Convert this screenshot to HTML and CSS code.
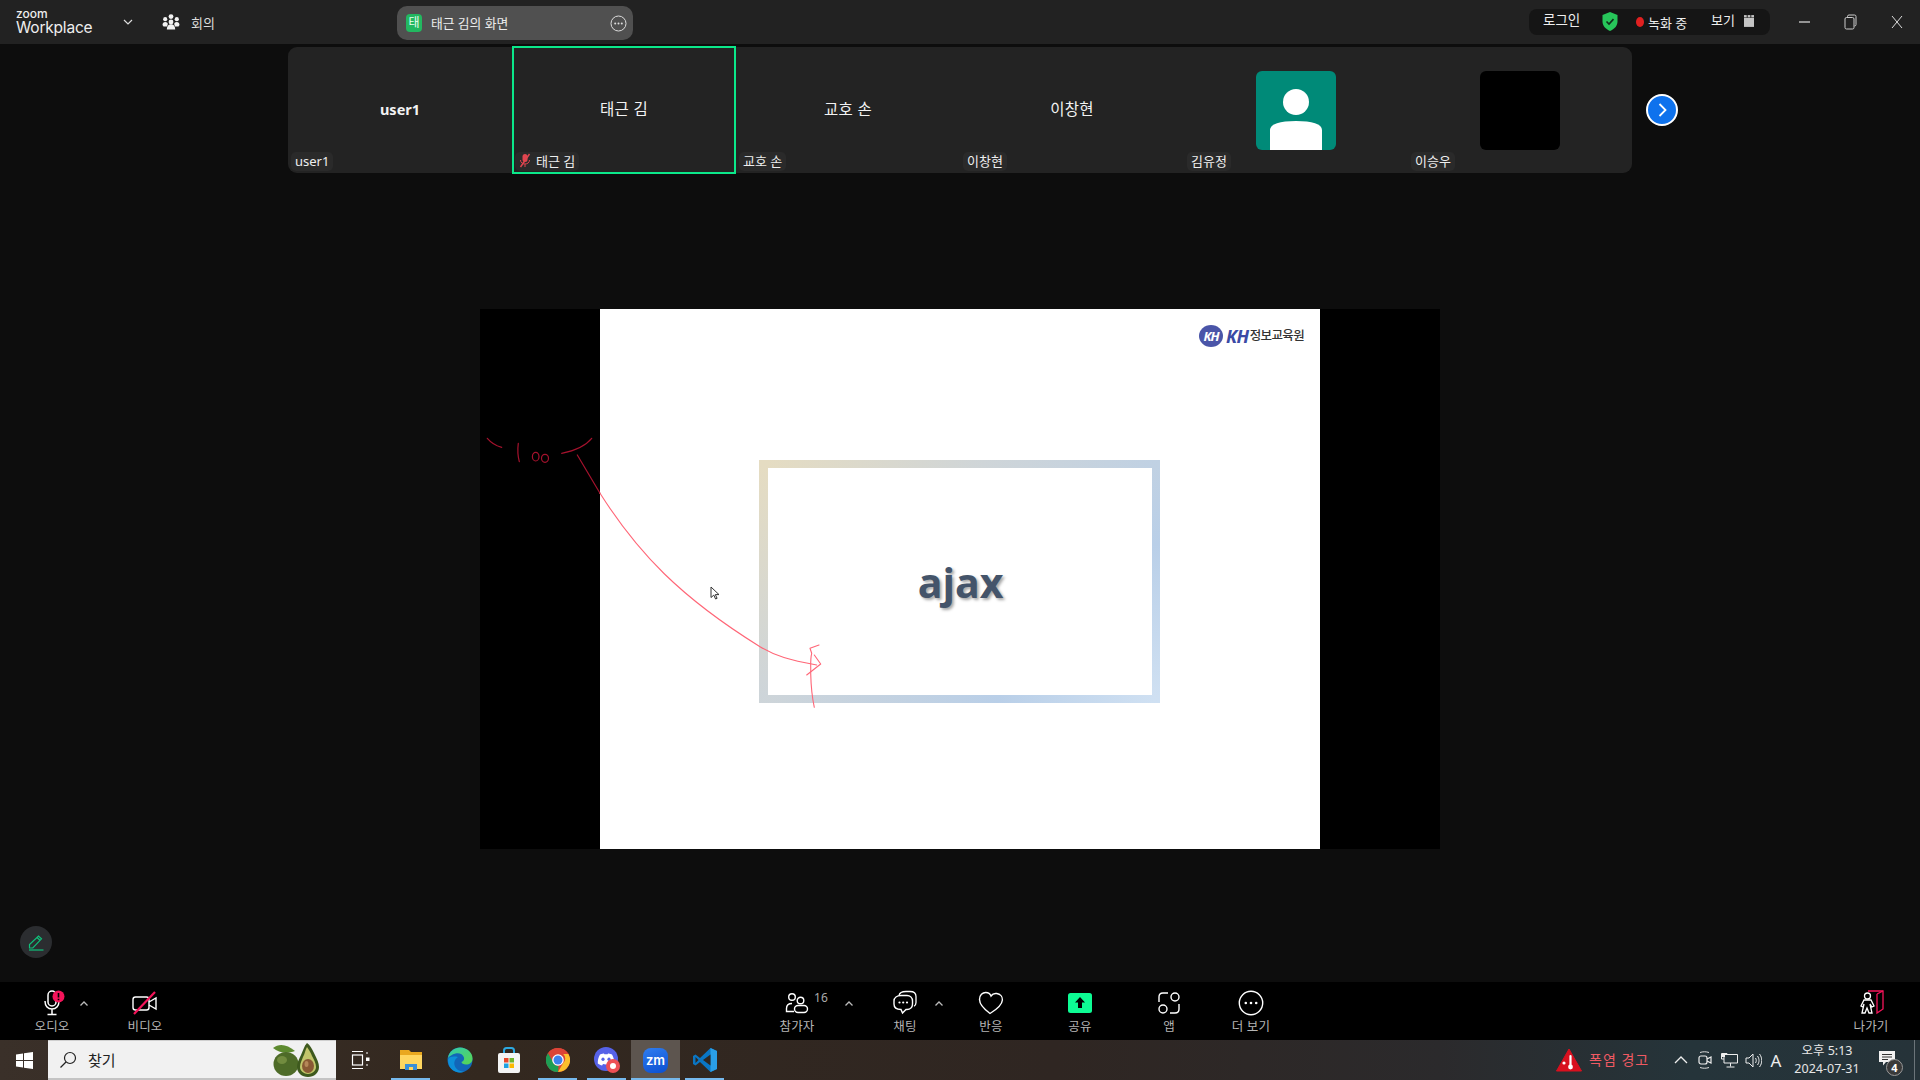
FILE: index.html
```html
<!DOCTYPE html>
<html lang="ko">
<head>
<meta charset="utf-8">
<title>Zoom Workplace</title>
<link rel="stylesheet" href="styles.css">
</head>
<body>
<div class="app">
  <header class="titlebar">
    <div class="brand"><span class="brand-small">zoom</span><span class="brand-big">Workplace</span></div>
    <svg class="brand-chevron" width="10" height="6" viewBox="0 0 10 6"><path d="M1 1l4 4 4-4" fill="none" stroke="#ddd" stroke-width="1.2"/></svg>
    <svg class="meet-icon" width="18" height="16" viewBox="0 0 18 16"><g fill="#f2f2f2"><circle cx="9" cy="2.6" r="2.4"/><circle cx="3.2" cy="5.2" r="2.1"/><circle cx="14.8" cy="5.2" r="2.1"/><circle cx="9" cy="8" r="2.4"/><path d="M0.5 11c0-2 1.2-3 2.7-3s2.5.8 2.6 2l-.8 2.4H1.5z"/><path d="M17.500 11c0-2-1.200-3-2.700-3s-2.500.8-2.600 2l.8 2.400h3.500z"/><path d="M4.800 15.500c0-3.300 1.800-5.200 4.200-5.200s4.200 1.900 4.200 5.200z"/></g></svg>
    <span class="meet-text">회의</span>
    <div class="share-tab">
      <span class="share-avatar">태</span>
      <span class="share-name">태근 김의 화면</span>
      <svg class="share-more" width="17" height="17" viewBox="0 0 17 17"><circle cx="8.500" cy="8.500" r="7.500" fill="none" stroke="#ddd" stroke-width="1"/><g fill="#ddd"><circle cx="5.200" cy="8.500" r="1"/><circle cx="8.500" cy="8.500" r="1"/><circle cx="11.800" cy="8.500" r="1"/></g></svg>
    </div>
    <div class="status-pill">
      <span class="status-login">로그인</span>
      <svg class="status-shield" width="16" height="19" viewBox="0 0 16 19"><path d="M8 0l7.500 3v6.500c0 4.500-3.200 7.500-7.500 9.500C3.700 17 .5 14 .5 9.500V3z" fill="#27c65a"/><path d="M4.500 9.500l2.500 2.600 4.500-5" fill="none" stroke="#10301c" stroke-width="1.600"/></svg>
      <span class="status-dot"></span>
      <span class="status-rec">녹화 중</span>
      <span class="status-view">보기</span>
      <svg class="status-grid" width="10" height="14" viewBox="0 0 11 15"><rect y="4" width="11" height="10" fill="#c4c4c4"/><rect x="0" y="1" width="3" height="2.500" fill="#c4c4c4"/><rect x="4" y="1" width="3" height="2.500" fill="#c4c4c4"/><rect x="8" y="1" width="3" height="2.500" fill="#c4c4c4"/></svg>
    </div>
    <div class="win-btn"><svg width="12" height="12" viewBox="0 0 12 12"><path d="M0 6h11" stroke="#bbb" stroke-width="1.500"/></svg></div>
    <div class="win-btn"><svg width="14" height="16" viewBox="0 0 14 16"><rect x="1" y="3.500" width="9" height="11.500" rx="1.500" fill="none" stroke="#ccc"/><path d="M3.500 3.500V2.500a1.500 1.500 0 0 1 1.500-1.500h5.500a1.500 1.500 0 0 1 1.500 1.500v8a1.500 1.500 0 0 1-1.500 1.500" fill="none" stroke="#ccc"/></svg></div>
    <div class="win-btn"><svg width="12" height="14" viewBox="0 0 12 14"><path d="M1 1l10 12M11 1L1 13" stroke="#ddd" stroke-width="1"/></svg></div>
  </header>

  <main class="stage">
    <div class="strip-row">
      <section class="strip">
        <div class="tile"><span class="tile-name tile-name-bold">user1</span><span class="tag">user1</span></div>
        <div class="tile tile-active"><span class="tile-name">태근 김</span>
          <span class="tag"><svg class="tag-mute" width="12" height="15" viewBox="0 0 12 15"><rect x="3.500" y="1" width="5" height="8" rx="2.500" fill="#e0454f"/><path d="M1.500 7c0 2.500 2 4 4.500 4s4.500-1.500 4.500-4M6 11v3" fill="none" stroke="#e0454f"/><path d="M10.500 1L1.500 14" stroke="#e0454f" stroke-width="1.500"/></svg>태근 김</span></div>
        <div class="tile"><span class="tile-name">교호 손</span><span class="tag">교호 손</span></div>
        <div class="tile"><span class="tile-name">이창현</span><span class="tag">이창현</span></div>
        <div class="tile"><div class="avatar avatar-teal"><svg width="80" height="79" viewBox="0 0 80 79"><ellipse cx="40" cy="31" rx="13" ry="13" fill="#fff"/><path d="M14 79V59c0-6 10-9 26-9s26 3 26 9v20z" fill="#fff"/></svg></div><span class="tag">김유정</span></div>
        <div class="tile"><div class="avatar avatar-black"></div><span class="tag">이승우</span></div>
      </section>
      <div class="strip-next"><svg width="16" height="16" viewBox="0 0 16 16"><path d="M5.500 2l6 6-6 6" fill="none" stroke="#fff" stroke-width="1.800"/></svg></div>
    </div>

    <section class="share">
      <div class="slide">
        <div class="kh-logo">
          <span class="kh-mark">KH</span><span class="kh-letters">KH</span><span class="kh-text">정보교육원</span>
        </div>
        <div class="frame"><span class="frame-title">ajax</span></div>
        <svg class="cursor" width="10" height="14" viewBox="0 0 10 14"><path d="M1 1v10.500l2.800-2.400 1.800 3.900 1.500-.7-1.800-3.700H9z" fill="#fff" stroke="#333" stroke-width="1"/></svg>
      </div>
      <svg class="ink" viewBox="480 309 960 540" width="960" height="540">
        <g fill="none" stroke="#a5122d" stroke-width="1.200" stroke-linecap="round">
          <path d="M487.300 438.300Q493 445 501.700 447.300"/>
          <path d="M518.300 443.300Q517 453 519.300 461.700"/>
          <ellipse cx="535.700" cy="456.700" rx="3.300" ry="4.300"/>
          <ellipse cx="545" cy="458.300" rx="3.500" ry="4"/>
          <path d="M561.700 453.300Q583 449 591.700 438.300"/>
          <path d="M577.300 455L600 493.300"/>
        </g>
        <g fill="none" stroke="#ff6677" stroke-width="1.100" stroke-linecap="round" stroke-linejoin="round">
          <path d="M600 493.300C638 553 680 597 760 646.700C775 656 790 660 816.700 665"/>
          <path d="M814.300 655L820.700 664L806.700 675"/>
          <path d="M819 645L810 648.300L811.700 653.300C810 660 811 667 810.700 673.300C811 686 812 697 814.300 707.300"/>
        </g>
      </svg>
    </section>

    <button class="pencil"><svg width="16" height="17" viewBox="0 0 16 17"><path d="M1.500 14v-3.500L10.500 2l3 2.800L4.800 14zM9 3.500l3 2.800" fill="none" stroke="#10c07a" stroke-width="1.200"/><path d="M1 16h14.500" stroke="#10c07a" stroke-width="1.200"/></svg></button>
  </main>

  <nav class="toolbar">
    <div class="tool tool-audio">
      <svg class="tool-icon" width="28" height="26" viewBox="-4 0 28 26"><rect x="6" y="1" width="8" height="15" rx="4" fill="none" stroke="#fff" stroke-width="1.500"/><path d="M3 11c0 5 3 8 7 8s7-3 7-8M10 19v5M5.500 24.500h9" fill="none" stroke="#fff" stroke-width="1.500"/><circle cx="16.500" cy="6.500" r="6" fill="#f5145a"/><path d="M16.500 3v4.500M16.500 8.700v1.500" stroke="#000" stroke-width="1.600"/></svg>
      <span>오디오</span>
    </div>
    <svg class="caret caret-audio" width="8" height="5" viewBox="0 0 8 5"><path d="M.5 4.500L4 1l3.500 3.500" fill="none" stroke="#bbb" stroke-width="1.300"/></svg>
    <div class="tool tool-video">
      <svg class="tool-icon" width="28" height="26" viewBox="0 0 28 26"><rect x="2" y="7" width="16" height="13" rx="2.500" fill="none" stroke="#fff" stroke-width="1.400"/><path d="M18 12l7-4v11l-7-4" fill="none" stroke="#fff" stroke-width="1.400"/><path d="M24 2L3 24" stroke="#f5145a" stroke-width="2.200"/></svg>
      <span>비디오</span>
    </div>
    <div class="tool tool-people">
      <svg class="tool-icon" width="24" height="22" viewBox="0 0 24 22"><g fill="none" stroke="#fff" stroke-width="1.400"><circle cx="7" cy="5" r="3.300"/><circle cx="15.500" cy="8.500" r="3.300"/><path d="M9 19.500H1.500v-3c0-3 2-5 5.500-5"/><rect x="9.500" y="13.500" width="13" height="7" rx="3.500"/></g></svg>
      <span class="people-count">16</span>
      <span>참가자</span>
    </div>
    <svg class="caret caret-people" width="8" height="5" viewBox="0 0 8 5"><path d="M.5 4.500L4 1l3.500 3.500" fill="none" stroke="#bbb" stroke-width="1.300"/></svg>
    <div class="tool tool-chat">
      <svg class="tool-icon" width="26" height="26" viewBox="0 0 26 26"><path d="M7 5.500C7.500 2.500 10 1.500 14 1.500h4c3.500 0 6 1.500 6 5v6c0 2-.7 3-2 3.700" fill="none" stroke="#fff" stroke-width="1.300"/><path d="M9 5.500h6c3 0 5.500 2 5.500 5.500v3c0 3.500-2.500 5.500-5.500 5.500h-1l-3.500 3.500-1.500-3.500C5 19.500 2 18 2 14v-3c0-3.500 3-5.500 7-5.500z" fill="none" stroke="#fff" stroke-width="1.400"/><g fill="#fff"><circle cx="7.500" cy="12.500" r="1.100"/><circle cx="11.200" cy="12.500" r="1.100"/><circle cx="15" cy="12.500" r="1.100"/></g></svg>
      <span>채팅</span>
    </div>
    <svg class="caret caret-chat" width="8" height="5" viewBox="0 0 8 5"><path d="M.5 4.500L4 1l3.500 3.500" fill="none" stroke="#bbb" stroke-width="1.300"/></svg>
    <div class="tool tool-react">
      <svg class="tool-icon" width="26" height="24" viewBox="0 0 26 24"><path d="M12 22.500C6 18 1.500 14 1.500 8.500 1.500 4 4.500 1.500 7.800 1.500c2.500 0 4.400 1.300 5.200 3.500 1.300-2 3.500-2.800 5.700-2.500 3.500.5 6 3 5.700 6.500-.3 4.500-5 9-12.400 13.500z" fill="none" stroke="#fff" stroke-width="1.400"/></svg>
      <span>반응</span>
    </div>
    <div class="tool tool-share">
      <svg class="tool-icon" width="24" height="20" viewBox="0 0 24 20"><rect width="24" height="20" rx="2.500" fill="#0dfc94"/><path d="M12 4l5 5.500h-3V15h-4V9.500H7z" fill="#000"/></svg>
      <span>공유</span>
    </div>
    <div class="tool tool-apps">
      <svg class="tool-icon" width="24" height="24" viewBox="0 0 24 24"><g fill="none" stroke="#fff" stroke-width="1.400"><path d="M11 2H6C3.500 2 2 3.500 2 6v5"/><circle cx="18" cy="6" r="4"/><circle cx="6" cy="18" r="4"/><path d="M13 22h5c2.500 0 4-1.500 4-4v-5"/></g></svg>
      <span>앱</span>
    </div>
    <div class="tool tool-more">
      <svg class="tool-icon" width="26" height="26" viewBox="0 0 26 26"><circle cx="13" cy="13" r="11.700" fill="none" stroke="#fff" stroke-width="1.400"/><g fill="#fff"><circle cx="7.800" cy="13" r="1.300"/><circle cx="13" cy="13" r="1.300"/><circle cx="18.200" cy="13" r="1.300"/></g></svg>
      <span>더 보기</span>
    </div>
    <div class="tool tool-leave">
      <svg class="tool-icon" width="26" height="26" viewBox="0 0 26 26"><path d="M10 1h15v18l-6 4V4" fill="none" stroke="#f5145a" stroke-width="1.300"/><path d="M19 4l6-3" stroke="#f5145a" stroke-width="1.300"/><g fill="#000" stroke="#fff" stroke-width="1.300"><circle cx="9.500" cy="6" r="3"/><path d="M6 10h7l3 6-2 1-2-3 2 9h-3l-2-5-2 5H4l2-9-1 3-2-1z"/></g></svg>
      <span>나가기</span>
    </div>
  </nav>

  <footer class="taskbar">
    <div class="start"><svg width="17" height="17" viewBox="0 0 17 17"><path fill="#fff" d="M0 2.500L7 1.500v6.500H0zM8 1.300L17 0v8H8zM0 9h7v6.500l-7-1zM8 9h9v8l-9-1.300z"/></svg></div>
    <div class="search">
      <svg class="search-glass" width="18" height="18" viewBox="0 0 18 18"><circle cx="11" cy="7" r="5.500" fill="none" stroke="#222" stroke-width="1.200"/><path d="M7 11l-5.500 5.500" stroke="#222" stroke-width="1.300"/></svg>
      <span class="search-text">찾기</span>
      <svg class="avocado" width="48" height="36" viewBox="0 0 48 36">
        <path d="M0 6C6 1 14 2 22 9c-8 3-16 2-22-3z" fill="#5d8a2f"/>
        <ellipse cx="13" cy="22" rx="12.500" ry="12" fill="#4e6b28"/>
        <ellipse cx="9" cy="18" rx="5" ry="4" fill="#728c3f"/>
        <path d="M34 1c3 2 5 6 7 10 3 6 5 10 5 14 0 6-5 10-11 10s-11-4-11-10c0-4 2-8 4-12 2-4 3-9 6-12z" fill="#3e5a1e"/>
        <path d="M34 5c2 3 4 6 5 9 2 4 4 7 4 11 0 4-4 7-8 7s-8-3-8-7c0-4 2-7 3-10 2-3 2-7 4-10z" fill="#c2c56a"/>
        <ellipse cx="35" cy="24" rx="6" ry="7" fill="#8a5a34"/>
        <ellipse cx="33.500" cy="22" rx="2" ry="3" fill="#b58758"/>
      </svg>
    </div>
    <div class="task task-view"><svg width="20" height="20" viewBox="0 0 20 20"><g fill="none" stroke="#fff" stroke-width="1.200"><path d="M1 1.500h11M1 18.500h11"/><rect x="1.500" y="5" width="10" height="10"/></g><rect x="15" y="7.500" width="3.500" height="3.500" fill="#fff"/><path d="M16 2v2M16 14v2" stroke="#fff"/></svg></div>
    <div class="task task-on"><svg width="24" height="22" viewBox="0 0 24 22"><path d="M1 1h9l2 2h11v17H1z" fill="#e9a820"/><path d="M1 6h22v14H1z" fill="#ffd660"/><path d="M6 15h12v6H6z" fill="#3a8fd8"/><path d="M10 18h4v3h-4z" fill="#ffd660"/></svg></div>
    <div class="task"><svg width="26" height="26" viewBox="0 0 26 26"><defs><linearGradient id="edgeA" x1="0" y1="0" x2="1" y2="1"><stop offset="0" stop-color="#31c9b0"/><stop offset="1" stop-color="#5ad64e"/></linearGradient></defs><circle cx="13" cy="13" r="12.500" fill="#1266b8"/><path d="M1 11C2 4 8 .5 13 .5c7 0 12.500 5 12.500 11 0 4-3 6-6.500 6-2.500 0-4.500-1-4.500-2.500 2-1 3-2.500 2.500-4.500C16 7 12 5.500 8.500 6.500 5 7.500 2.500 9 1 11z" fill="url(#edgeA)"/><path d="M1 13c0 7 5 12 11 12.500 2 .2 4-.3 5-1-5 0-8.500-2.500-9.500-6.500-.7-3.500 1-6.500 3.500-8C6.500 9 1.500 9.500 1 13z" fill="#0d8fd8"/></svg></div>
    <div class="task"><svg width="24" height="27" viewBox="0 0 24 27"><path d="M7 7V3.500C7 2 8 1 9.500 1h5C16 1 17 2 17 3.500V7" fill="none" stroke="#2ca9e1" stroke-width="2"/><rect x="1" y="6" width="22" height="20" rx="2" fill="#f4f4f4"/><rect x="7" y="11" width="4.500" height="4.500" fill="#e8482b"/><rect x="12.500" y="11" width="4.500" height="4.500" fill="#6fb52c"/><rect x="7" y="16.500" width="4.500" height="4.500" fill="#1da1e2"/><rect x="12.500" y="16.500" width="4.500" height="4.500" fill="#fbb900"/></svg></div>
    <div class="task task-on"><svg width="24" height="24" viewBox="0 0 24 24"><circle cx="12" cy="12" r="12" fill="#db4437"/><path d="M12 0a12 12 0 0 1 10.400 6H12a6 6 0 0 0-5.400 3.400L2.400 4.500A12 12 0 0 1 12 0z" fill="#db4437"/><path d="M22.400 6A12 12 0 0 1 12 24l5.200-9a6 6 0 0 0 0-9z" fill="#fbc02d"/><path d="M12 24A12 12 0 0 1 2 5.200L7 14a6 6 0 0 0 5.500 4z" fill="#1e9e54"/><circle cx="12" cy="12" r="5.800" fill="#fff"/><circle cx="12" cy="12" r="4.500" fill="#3d82ee"/></svg></div>
    <div class="task task-on"><svg width="26" height="26" viewBox="0 0 26 26"><circle cx="12" cy="12" r="12" fill="#5662e8"/><path d="M6 7.500c2-.8 3.500-1 4-1l.4.8c1-.2 2.200-.2 3.200 0l.4-.8c.5 0 2 .2 4 1 1.700 3 2.400 6 2.200 9-1.500 1.100-3 1.700-4.300 2l-.9-1.400c-1.800.6-4.200.6-6 0l-.9 1.400c-1.300-.3-2.800-.9-4.300-2C3.600 13.500 4.300 10.500 6 7.500z" fill="#fff"/><ellipse cx="9" cy="12.300" rx="1.600" ry="1.800" fill="#5662e8"/><ellipse cx="15" cy="12.300" rx="1.600" ry="1.800" fill="#5662e8"/><circle cx="19" cy="19" r="7" fill="#ed4f55"/><circle cx="19" cy="19" r="3" fill="#fff"/></svg></div>
    <div class="task task-on task-active"><span class="zm-icon">zm</span></div>
    <div class="task task-on"><svg width="24" height="24" viewBox="0 0 24 24"><path d="M17.500 0L7 10 2.500 6.500 0 8v8l2.500 1.500L7 14l10.500 10 6.500-3V3z" fill="#0a76c4"/><path d="M17.500 0L24 3v18l-6.500 3z" fill="#2a9fe8"/><path d="M17.500 6.500L10 12l7.500 5.500z" fill="#2f2721"/><path d="M2.500 9v6L5.500 12z" fill="#2f2721"/></svg></div>
    <div class="tray">
      <svg class="heat-icon" width="26" height="24" viewBox="0 0 26 24"><path d="M13 1l12.500 22H.5z" fill="#d8101f" stroke="#d8101f" stroke-linejoin="round"/><path d="M14.500 8v9.500" stroke="#fff" stroke-width="2.200" stroke-linecap="round"/><circle cx="14.500" cy="19" r="2.400" fill="#fff"/><circle cx="8" cy="15" r="1.600" fill="#fff"/></svg>
      <span class="heat-text">폭염 경고</span>
      <span class="tray-item tray-caret"><svg width="14" height="8" viewBox="0 0 14 8"><path d="M1 7l6-6 6 6" fill="none" stroke="#eee" stroke-width="1.300"/></svg></span>
      <span class="tray-item"><svg width="14" height="18" viewBox="0 0 14 18"><path d="M2 1.500c3-1 6-1 9 0M2 16.500c3 1 6 1 9 0" fill="none" stroke="#ddd"/><rect x="1" y="5" width="8" height="8" rx="2" fill="none" stroke="#eee" stroke-width="1.200"/><path d="M9 8l4-2v6l-4-2" fill="none" stroke="#eee" stroke-width="1.200"/></svg></span>
      <span class="tray-item"><svg width="17" height="15" viewBox="0 0 17 15"><path d="M3 1.500h13.500V10H3zM3 6H.5V.5H6V2M9.500 10v3.500M5.500 14h8" fill="none" stroke="#eee" stroke-width="1"/><rect x="1" y="1" width="3" height="3" fill="#eee"/></svg></span>
      <span class="tray-item"><svg width="17" height="15" viewBox="0 0 17 15"><path d="M1 5h3l4-4v13l-4-4H1z" fill="none" stroke="#eee"/><path d="M10.500 5c1 1.500 1 3.500 0 5M12.500 3c2 3 2 6 0 9M14.500 1c3 4 3 9 0 13" fill="none" stroke="#eee"/></svg></span>
      <span class="tray-a">A</span>
      <div class="clock"><span>오후 5:13</span><span>2024-07-31</span></div>
      <div class="notify">
        <svg class="notify-icon" width="18" height="16" viewBox="0 0 18 16"><path d="M1 1h16v11h-9l-3 3.500V12H1z" fill="#f2f2f2"/><path d="M4 4.500h10M4 7h10M4 9.500h6" stroke="#333" stroke-width="1"/></svg>
        <span class="notify-badge">4</span>
      </div>
      <div class="show-desktop"></div>
    </div>
  </footer>
</div>
</body>
</html>
```
FILE: styles.css
```css
* { box-sizing: border-box; }
html, body { margin: 0; height: 100%; }
body {
  overflow: hidden;
  background: #0d0d0d;
  color: #fff;
  font-family: "Noto Sans", "Noto Sans CJK KR", sans-serif;
  font-size: 12px;
}
.app {
  width: 1920px;
  height: 1080px;
  display: grid;
  grid-template-rows: 44px 938px 58px 40px;
}

/* Title bar */
.titlebar {
  display: flex;
  align-items: center;
  background: #222222;
  padding-left: 16px;
}
.brand { display: flex; flex-direction: column; width: 76px; line-height: 1; }
.brand-small { font-size: 12px; font-weight: 500; line-height: 11px; color: #eee; font-family: "Inter", sans-serif; }
.brand-big { font-size: 15.500px; line-height: 17px; color: #eee; font-family: "Inter", sans-serif; letter-spacing: -0.2px; }
.brand-chevron { margin-left: 31px; }
.meet-icon { margin-left: 29px; }
.meet-text { margin-left: 11px; font-size: 13px; color: #ddd; }
.share-tab {
  margin-left: 182px;
  width: 236px;
  height: 34px;
  margin-top: 2px;
  display: flex;
  align-items: center;
  padding: 0 6px 0 9px;
  background: #505050;
  border-radius: 10px;
}
.share-avatar {
  width: 16px;
  height: 18px;
  background: #22b860;
  border-radius: 4px;
  font-size: 12px;
  line-height: 18px;
  text-align: center;
  color: #eafff0;
}
.share-name { margin-left: 9px; margin-bottom: 2px; font-size: 12.800px; color: #ececec; flex: 1; }
.status-pill {
  margin-left: auto;
  margin-right: 12px;
  width: 241px;
  height: 26px;
  display: flex;
  align-items: center;
  padding-left: 14px;
  background: #151515;
  border-radius: 8px;
}
.status-login { width: 39px; font-size: 13.500px; line-height: 1; margin-bottom: 3px; white-space: nowrap; color: #eee; }
.status-shield { margin-left: 20px; margin-bottom: 2px; }
.status-dot { width: 8px; height: 10px; margin-left: 18px; border-radius: 50%; background: #e02020; }
.status-rec { margin-left: 4px; width: 38px; font-size: 13px; line-height: 1; white-space: nowrap; color: #eee; margin-top: 2px; }
.status-view { margin-left: 25px; font-size: 13px; line-height: 1; color: #eee; margin-bottom: 3px; }
.status-grid { margin-left: 9px; margin-bottom: 2px; }
.win-btn { width: 46px; height: 44px; display: flex; align-items: center; justify-content: center; }

/* Stage */
.stage { position: relative; display: flex; flex-direction: column; }
.strip-row { display: flex; align-items: center; margin-top: 3px; padding-left: 288px; }
.strip {
  display: flex;
  width: 1344px;
  height: 126px;
  background: #232323;
  border-radius: 9px;
}
.tile {
  position: relative;
  width: 224px;
  height: 126px;
  display: flex;
  justify-content: center;
  padding-top: 24px;
}
.tile-active { margin-top: -1px; height: 128px; outline: 2px solid #0be88a; outline-offset: -2px; padding-top: 25px; }
.tile-name { font-size: 15.500px; line-height: 20px; margin-top: 28px; color: #f2f2f2; letter-spacing: 0.3px; }
.tile-name-bold { font-weight: 700; font-size: 14.500px; letter-spacing: 0; }
.tag {
  position: absolute;
  left: 3px;
  bottom: 2px;
  height: 19px;
  display: flex;
  align-items: center;
  padding: 0 4px 2px;
  font-size: 13px;
  background: #2a2a2a;
  border-radius: 5px;
  color: #eee;
}
.tile-active .tag { left: 3px; bottom: 3px; }
.tag-mute { margin-right: 5px; }
.avatar { width: 80px; height: 79px; border-radius: 6px; overflow: hidden; }
.avatar-teal { background: #008a78; }
.avatar-black { background: #000; }
.strip-next {
  margin-left: 14px;
  width: 32px;
  height: 32px;
  display: flex;
  align-items: center;
  justify-content: center;
  background: #0e72ed;
  border: 2.500px solid #fff;
  border-radius: 50%;
}

.share {
  position: relative;
  width: 960px;
  height: 540px;
  margin: 136px 0 0 480px;
  background: #000;
}
.slide {
  position: relative;
  width: 720px;
  height: 540px;
  margin: 0 auto;
  background: #fff;
  padding-top: 151px;
}
.ink { position: absolute; left: 0; top: 0; }
.frame {
  width: 401px;
  height: 243px;
  margin-left: 159px;
  padding-top: 2px;
  display: flex;
  align-items: center;
  justify-content: center;
  border-style: solid;
  border-color: transparent;
  border-width: 8px 8px 8px 9px;
  border-image: linear-gradient(135deg, #e5dcc2 0%, #cfd5d8 35%, #b9cfe8 75%, #cfe0f2 100%) 1;
}
.frame-title {
  font-family: "Open Sans", "Noto Sans", sans-serif;
  font-weight: 700;
  font-size: 41px;
  line-height: 1;
  color: #44546a;
  text-shadow: 2px 2px 3px rgba(0, 0, 0, 0.35);
  margin-left: 1px;
}
.kh-logo {
  position: absolute;
  left: 599px;
  top: 16px;
  display: flex;
  align-items: center;
  color: #333;
}
.kh-mark {
  width: 24px;
  height: 22px;
  border-radius: 50%;
  background: #4a55a8;
  color: #fff;
  font-size: 13px;
  font-weight: 700;
  font-style: italic;
  line-height: 22px;
  text-align: center;
  letter-spacing: -1px;
}
.kh-letters { margin-left: 3px; color: #3a4aa5; font-size: 18px; font-weight: 700; font-style: italic; letter-spacing: -0.5px; line-height: 1; }
.kh-text { margin-left: 1px; font-size: 12.500px; font-weight: 500; letter-spacing: -0.6px; line-height: 1; }
.cursor { position: absolute; left: 110px; top: 277px; }
.pencil {
  position: absolute;
  left: 20px;
  top: 882px;
  width: 32px;
  height: 32px;
  padding: 0;
  border: 0;
  border-radius: 50%;
  background: #2b2d30;
  display: flex;
  align-items: center;
  justify-content: center;
}

/* Toolbar */
.toolbar { display: flex; background: #000; }
.tool {
  position: relative;
  width: 60px;
  height: 58px;
  display: flex;
  flex-direction: column;
  align-items: center;
  color: #b5b5b5;
  font-size: 12.500px;
  letter-spacing: 0.2px;
  line-height: 16px;
  white-space: nowrap;
}
.tool-icon { height: 26px; margin-top: 8px; margin-bottom: 3px; }
.caret { margin-top: 19px; flex: none; width: 10px; }
.tool-audio { margin-left: 22px; }
.caret-audio { margin-left: -3px; }
.tool-video { margin-left: 26px; }
.tool-people { margin-left: 592px; }
.people-count { position: absolute; left: 47px; top: 8px; font-size: 12px; line-height: 16px; color: #aaa; }
.caret-people { margin-left: 17px; }
.tool-chat { margin-left: 21px; }
.caret-chat { margin-left: -1px; }
.tool-react { margin-left: 17px; }
.tool-share { margin-left: 29px; }
.tool-apps { margin-left: 29px; }
.tool-more { margin-left: 22px; }
.tool-leave { margin-left: auto; margin-right: 19px; }

/* Taskbar */
.taskbar {
  display: flex;
  align-items: stretch;
  background: linear-gradient(90deg, #3a3029 0%, #33281f 25%, #2f2622 55%, #2b2a2c 75%, #25343a 88%, #263339 100%);
}
.start { width: 48px; display: flex; align-items: center; justify-content: center; }
.search {
  width: 288px;
  display: flex;
  align-items: center;
  padding-left: 11px;
  background: #f1f1f1;
  border-top: 1px solid #cfcfcf;
  border-bottom: 2px solid #c4c4c4;
}
.search-text { margin-left: 11px; font-size: 15px; color: #222; flex: 1; }
.avocado { margin-right: 15px; }
.task { position: relative; width: 49px; display: flex; align-items: center; justify-content: center; }
.task-view { width: 50px; }
.task-on::after {
  content: "";
  position: absolute;
  left: 5px;
  right: 5px;
  bottom: 0;
  height: 2px;
  background: #76b9ed;
}
.task-active { background: #5d554f; }
.task-active::after { left: 0; right: 0; }
.zm-icon {
  width: 25px;
  height: 25px;
  border-radius: 8px;
  background: linear-gradient(160deg, #2f7df0, #0b4fd0);
  color: #fff;
  font-family: "Inter", sans-serif;
  font-size: 13px;
  font-weight: 600;
  line-height: 24px;
  text-align: center;
}
.tray { margin-left: auto; display: flex; align-items: center; }
.heat-text { margin-left: 7px; width: 80px; font-size: 14px; color: #f05a63; letter-spacing: 1px; white-space: nowrap; margin-bottom: 2px; }
.tray-item { width: 24px; display: flex; justify-content: center; }
.tray-a { width: 22px; font-size: 17px; text-align: center; color: #eee; }
.clock {
  width: 80px;
  display: flex;
  flex-direction: column;
  align-items: center;
  font-size: 12.500px;
  line-height: 18px;
  color: #e6e6e6;
}
.notify { position: relative; width: 40px; height: 40px; display: flex; align-items: center; justify-content: center; }
.notify-icon { margin-top: -4px; }
.notify-badge {
  position: absolute;
  left: 19px;
  top: 19px;
  width: 17px;
  height: 17px;
  border: 1px solid #999;
  border-radius: 50%;
  background: #3a3a3a;
  font-size: 11px;
  font-weight: 700;
  line-height: 15px;
  text-align: center;
}
.show-desktop { width: 13px; height: 40px; background: linear-gradient(90deg, transparent 7px, #6b7479 7px, #6b7479 8px, transparent 8px); }
```
